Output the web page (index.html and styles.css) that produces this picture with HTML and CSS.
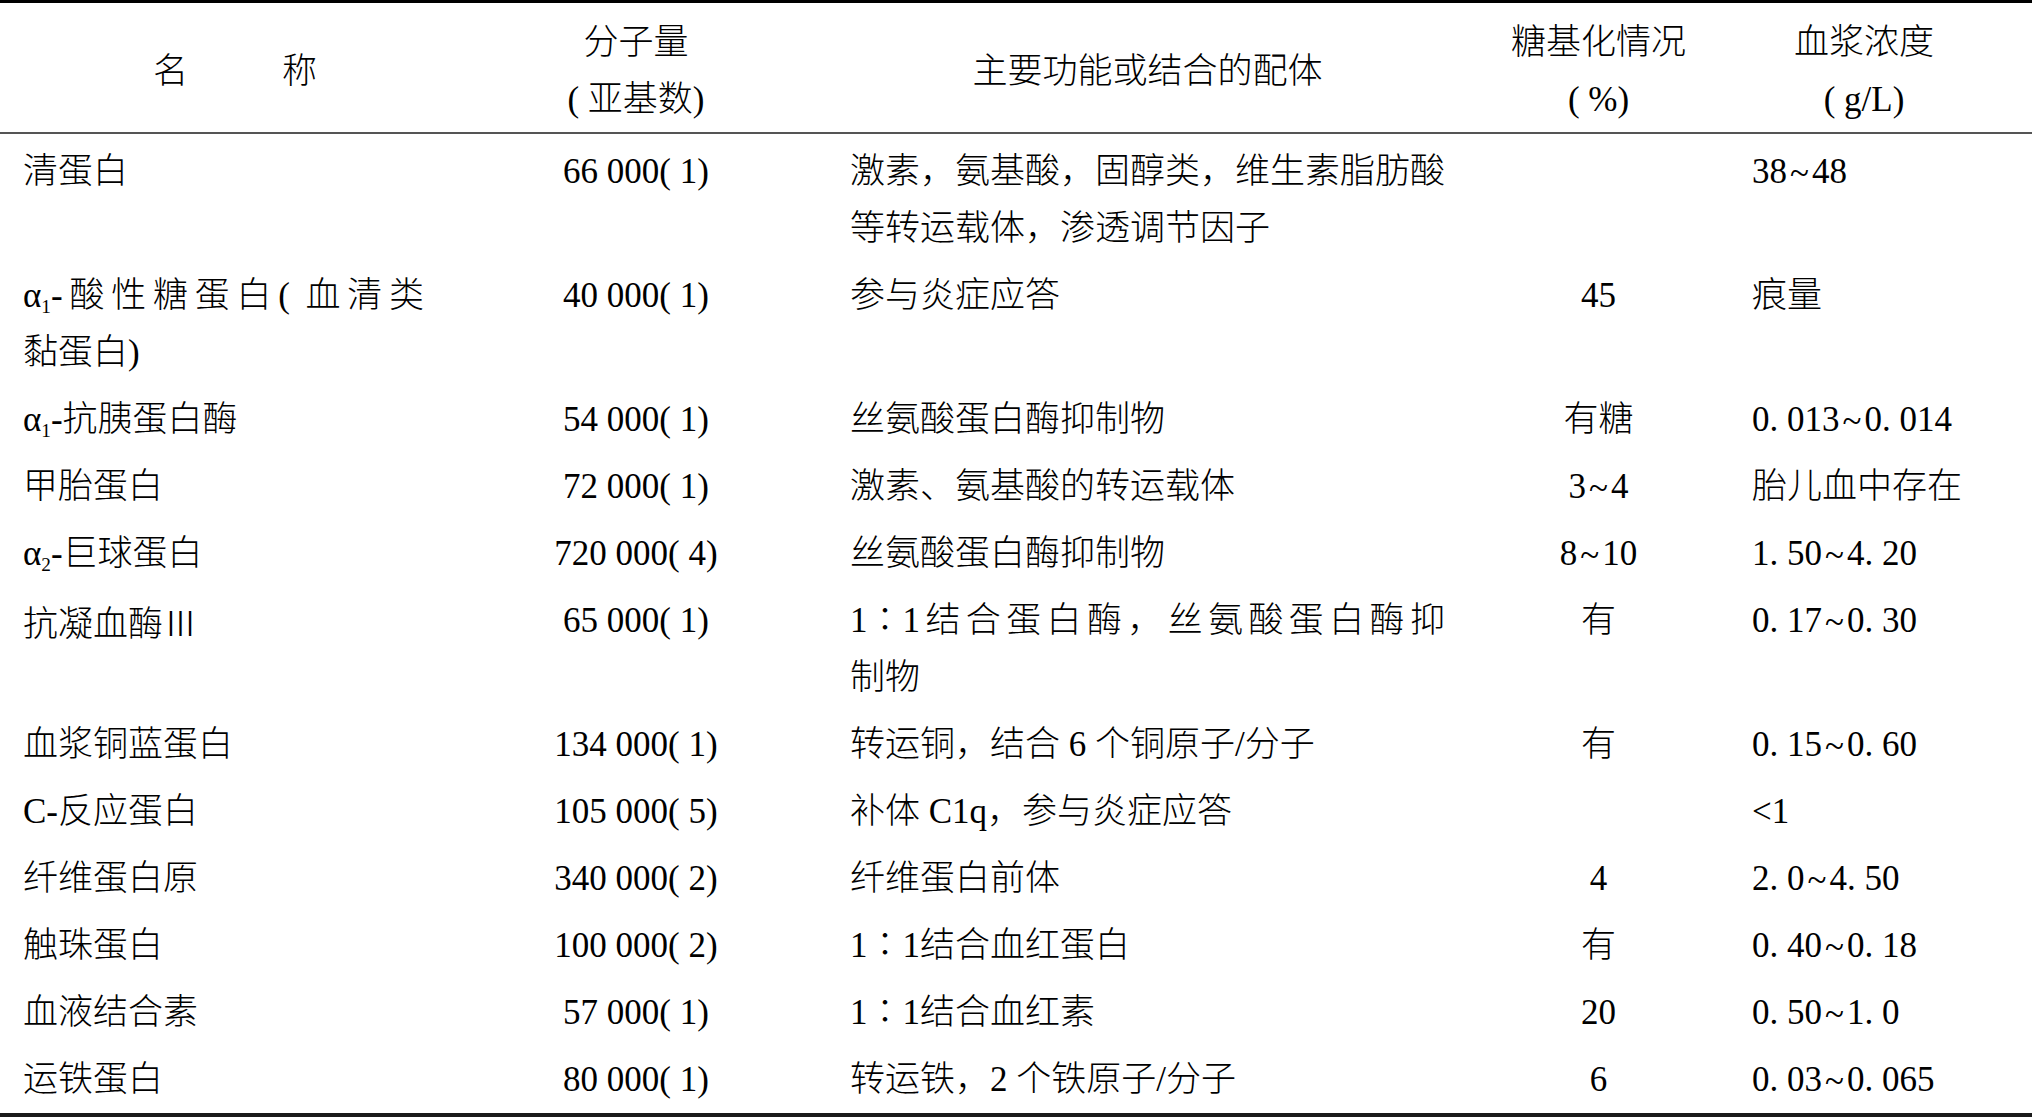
FILE: index.html
```html
<!DOCTYPE html>
<html lang="zh-CN">
<head>
<meta charset="utf-8">
<title>血浆蛋白</title>
<link rel="stylesheet" href="styles.css">
</head>
<body>
<table class="ptable">
  <colgroup>
    <col class="c1"><col class="c2"><col class="c3"><col class="c4"><col class="c5">
  </colgroup>
  <thead>
    <tr>
      <th class="h-name">名<span class="gap"></span>称</th>
      <th class="h-mw">分子量<br>( 亚基数)</th>
      <th class="h-fn">主要功能或结合的配体</th>
      <th class="h-gly">糖基化情况<br>( %)</th>
      <th class="h-conc">血浆浓度<br>( g/L)</th>
    </tr>
  </thead>
  <tbody>
    <tr class="first">
      <td class="name">清蛋白</td>
      <td class="mw">66 000( 1)</td>
      <td class="fn"><span class="jline">激素，氨基酸，固醇类，维生素脂肪酸</span>等转运载体，渗透调节因子</td>
      <td class="gly"></td>
      <td class="conc">38<span class="tl">~</span>48</td>
    </tr>
    <tr>
      <td class="name"><span class="jline">α<sub>1</sub>-酸性糖蛋白( 血清类</span>黏蛋白)</td>
      <td class="mw">40 000( 1)</td>
      <td class="fn">参与炎症应答</td>
      <td class="gly">45</td>
      <td class="conc">痕量</td>
    </tr>
    <tr>
      <td class="name">α<sub>1</sub>-抗胰蛋白酶</td>
      <td class="mw">54 000( 1)</td>
      <td class="fn">丝氨酸蛋白酶抑制物</td>
      <td class="gly">有糖</td>
      <td class="conc">0. 013<span class="tl">~</span>0. 014</td>
    </tr>
    <tr>
      <td class="name">甲胎蛋白</td>
      <td class="mw">72 000( 1)</td>
      <td class="fn">激素、氨基酸的转运载体</td>
      <td class="gly">3<span class="tl">~</span>4</td>
      <td class="conc">胎儿血中存在</td>
    </tr>
    <tr>
      <td class="name">α<sub>2</sub>-巨球蛋白</td>
      <td class="mw">720 000( 4)</td>
      <td class="fn">丝氨酸蛋白酶抑制物</td>
      <td class="gly">8<span class="tl">~</span>10</td>
      <td class="conc">1. 50<span class="tl">~</span>4. 20</td>
    </tr>
    <tr>
      <td class="name">抗凝血酶<span class="roman">Ⅲ</span></td>
      <td class="mw">65 000( 1)</td>
      <td class="fn"><span class="jline">1∶1结合蛋白酶，丝氨酸蛋白酶抑</span>制物</td>
      <td class="gly">有</td>
      <td class="conc">0. 17<span class="tl">~</span>0. 30</td>
    </tr>
    <tr>
      <td class="name">血浆铜蓝蛋白</td>
      <td class="mw">134 000( 1)</td>
      <td class="fn">转运铜，结合 6 个铜原子/分子</td>
      <td class="gly">有</td>
      <td class="conc">0. 15<span class="tl">~</span>0. 60</td>
    </tr>
    <tr>
      <td class="name">C-反应蛋白</td>
      <td class="mw">105 000( 5)</td>
      <td class="fn">补体 C1q，参与炎症应答</td>
      <td class="gly"></td>
      <td class="conc">&lt;1</td>
    </tr>
    <tr>
      <td class="name">纤维蛋白原</td>
      <td class="mw">340 000( 2)</td>
      <td class="fn">纤维蛋白前体</td>
      <td class="gly">4</td>
      <td class="conc">2. 0<span class="tl">~</span>4. 50</td>
    </tr>
    <tr>
      <td class="name">触珠蛋白</td>
      <td class="mw">100 000( 2)</td>
      <td class="fn">1∶1结合血红蛋白</td>
      <td class="gly">有</td>
      <td class="conc">0. 40<span class="tl">~</span>0. 18</td>
    </tr>
    <tr>
      <td class="name">血液结合素</td>
      <td class="mw">57 000( 1)</td>
      <td class="fn">1∶1结合血红素</td>
      <td class="gly">20</td>
      <td class="conc">0. 50<span class="tl">~</span>1. 0</td>
    </tr>
    <tr>
      <td class="name">运铁蛋白</td>
      <td class="mw">80 000( 1)</td>
      <td class="fn">转运铁，2 个铁原子/分子</td>
      <td class="gly">6</td>
      <td class="conc">0. 03<span class="tl">~</span>0. 065</td>
    </tr>
  </tbody>
</table>
</body>
</html>
```

FILE: styles.css
```css
html, body {
  margin: 0;
  padding: 0;
  background: #ffffff;
}

body {
  font-family: "Liberation Serif", "Noto Sans CJK SC", serif;
  font-size: 35px;
  font-weight: 300;
  color: #000000;
}

.ptable {
  width: 2032px;
  table-layout: fixed;
  border-collapse: separate;
  border-spacing: 0;
  border-top: 3px solid #000000;
  border-bottom: 4px solid #1a1a1a;
}

col.c1 { width: 450px; }
col.c2 { width: 372px; }
col.c3 { width: 651px; }
col.c4 { width: 251px; }
col.c5 { width: 308px; }

th {
  font-weight: 300;
  line-height: 57px;
  padding: 11px 0 4px;
  border-bottom: 2px solid #555555;
  vertical-align: middle;
  text-align: center;
}

th.h-name {
  padding-left: 43px;
  padding-right: 23px;
}

th.h-fn {
  padding-left: 28px;
  padding-right: 28px;
}

th.h-conc {
  padding-left: 28px;
  padding-right: 56px;
}

.gap {
  display: inline-block;
  width: 94px;
}

td {
  line-height: 57px;
  padding-top: 5px;
  padding-bottom: 5px;
  vertical-align: top;
}

tr.first td {
  padding-top: 9px;
}

td.name {
  padding-left: 23px;
  padding-right: 26px;
  text-align: left;
}

td.mw {
  text-align: center;
  white-space: nowrap;
}

td.fn {
  padding-left: 28px;
  padding-right: 28px;
  text-align: left;
}

td.gly {
  text-align: center;
  white-space: nowrap;
}

td.conc {
  padding-left: 28px;
  padding-right: 56px;
  text-align: left;
  white-space: nowrap;
}

.jline {
  display: block;
  text-align: justify;
  text-align-last: justify;
}

.tl {
  display: inline-block;
  margin: 0 3px;
  transform: translateY(2px);
}

.roman {
  font-family: "Noto Sans CJK SC", sans-serif;
}

sub {
  font-size: 0.55em;
  vertical-align: -0.3em;
  line-height: 0;
}
```
